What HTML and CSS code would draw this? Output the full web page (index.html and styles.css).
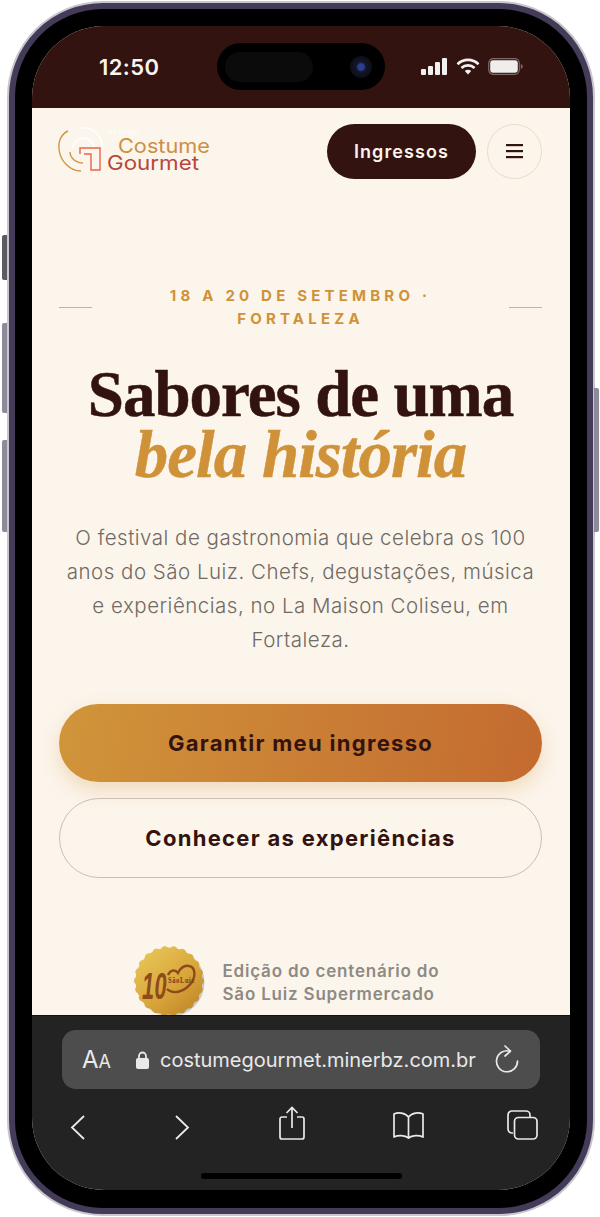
FILE: index.html
```html
<!DOCTYPE html>
<html lang="pt-BR">
<head>
  <meta charset="UTF-8" />
  <meta name="viewport" content="width=device-width, initial-scale=1.0" />
  <title>Costume Gourmet</title>
  <link rel="stylesheet" href="styles.css">
</head>
<body>
  <div class="phone">
    <span class="side-btn side-silent"></span>
    <span class="side-btn side-up"></span>
    <span class="side-btn side-down"></span>
    <span class="side-btn side-power"></span>
    <div class="bezel">
      <div class="screen">
        <div class="island">
          <span class="island-pill"></span>
          <span class="island-cam"></span>
        </div>

        <div class="status">
          <span class="clock">12:50</span>
          <div class="status-icons">
            <svg width="27" height="17" viewBox="0 0 27 17" fill="#f2f0ee">
              <rect x="0" y="11" width="5" height="6" rx="1"/>
              <rect x="7" y="8" width="5" height="9" rx="1"/>
              <rect x="14" y="4" width="5" height="13" rx="1"/>
              <rect x="21" y="0" width="5" height="17" rx="1"/>
            </svg>
            <svg width="24" height="17" viewBox="0 0 24 17" fill="none" stroke="#f2f0ee" stroke-width="2.6">
              <path d="M1.5 6.2a15 15 0 0 1 21 0"/>
              <path d="M5.4 10a9.5 9.5 0 0 1 13.2 0"/>
              <path d="M12 16.5l-3.2-3.4a4.6 4.6 0 0 1 6.4 0z" fill="#f2f0ee" stroke="none"/>
            </svg>
            <svg width="35" height="17" viewBox="0 0 35 17">
              <rect x="0.7" y="0.7" width="30.6" height="15.6" rx="4.5" fill="none" stroke="#7c6a66" stroke-width="1.2"/>
              <rect x="2.2" y="2.2" width="27.6" height="12.6" rx="3" fill="#f0eeec"/>
              <path d="M32.8 6v5c1.2-.4 2-1.4 2-2.5s-.8-2.1-2-2.5z" fill="#7c6a66"/>
            </svg>
          </div>
        </div>

        <main class="site">
          <header class="site-head">
            <svg class="logo" width="155" height="50" viewBox="0 0 155 50" fill="none">
              <path d="M11 4C3 8 1 16 2 22c1 12 11 22 22 22" stroke="#cf9548" stroke-width="1.4"/>
              <path d="M24 1c12-1 21 7 21 19" stroke="#fff" stroke-width="1.4"/>
              <path d="M16 21c0-6 5-10 10-10 5 0 9 3 11 8" stroke="#fff" stroke-width="1.4"/>
              <path d="M13 25c0 6 6 11 13 11" stroke="#cf9548" stroke-width="1.4"/>
              <path d="M23 27v-6h20v22h-9V27h-7" stroke="#e8644c" stroke-width="1.4"/>
              <text class="logo-fest" x="52" y="8">FESTIVAL</text>
              <text class="logo-word logo-word-a" x="61" y="26" textLength="92" lengthAdjust="spacingAndGlyphs">Costume</text>
              <text class="logo-word logo-word-b" x="50" y="43" textLength="92" lengthAdjust="spacingAndGlyphs">Gourmet</text>
            </svg>
            <div class="head-actions">
              <a class="ticket-btn">Ingressos</a>
              <button class="menu-btn" aria-label="Menu">
                <svg width="17" height="15" viewBox="0 0 17 15" fill="#32130f">
                  <rect y="0" width="17" height="2.2"/>
                  <rect y="6" width="17" height="2.2"/>
                  <rect y="12" width="17" height="2.2"/>
                </svg>
              </button>
            </div>
          </header>

          <section class="hero">
            <div class="eyebrow">
              <span class="eyebrow-line"></span>
              <p>18 A 20 DE SETEMBRO ·<br>FORTALEZA</p>
              <span class="eyebrow-line"></span>
            </div>
            <h1>Sabores de uma <em>bela história</em></h1>
            <p class="lead">O festival de gastronomia que celebra os 100 anos do São Luiz. Chefs, degustações, música e experiências, no La Maison Coliseu, em Fortaleza.</p>
            <a class="cta cta-main">Garantir meu ingresso</a>
            <a class="cta cta-ghost">Conhecer as experiências</a>
            <div class="edition">
              <svg class="medal" width="74" height="74" viewBox="0 0 74 74">
                <defs>
                  <linearGradient id="gold" gradientUnits="userSpaceOnUse" x1="10" y1="6" x2="62" y2="70">
                    <stop offset="0" stop-color="#e8c558"/>
                    <stop offset="0.55" stop-color="#d8a63a"/>
                    <stop offset="1" stop-color="#bf8428"/>
                  </linearGradient>
                </defs>
                <circle cx="37.500" cy="37.500" r="34" fill="#8d97a6" opacity="0.45"/>
                <circle cx="36" cy="36" r="31.5" fill="none" stroke="url(#gold)" stroke-width="7" stroke-linecap="round" stroke-dasharray="0.01 8.99"/>
                <circle cx="36" cy="36" r="33.5" fill="url(#gold)"/>
                <text class="medal-num" x="9" y="54" textLength="25" lengthAdjust="spacingAndGlyphs">10</text>
                <path d="M34 44c6 6 18 3 25-7 4-7 3-15-3-16-5-1-9 3-11 7-3-4-8-3-10 2" fill="none" stroke="#8f4a1b" stroke-width="2.4"/>
                <text class="medal-name" x="35" y="38" textLength="27" lengthAdjust="spacingAndGlyphs">SãoLuiz</text>
              </svg>
              <p>Edição do centenário do<br>São Luiz Supermercado</p>
            </div>
          </section>
        </main>

        <footer class="safari">
          <div class="url-bar">
            <span class="aa">A<small>A</small></span>
            <svg width="13" height="18" viewBox="0 0 13 18" fill="#e9e9e9">
              <path d="M3 8V5a3.5 3.5 0 0 1 7 0v3" fill="none" stroke="#e9e9e9" stroke-width="1.8"/>
              <rect x="0" y="7" width="13" height="11" rx="2"/>
            </svg>
            <span class="url">costumegourmet.minerbz.com.br</span>
            <svg class="reload" width="24" height="29" viewBox="0 0 24 29" fill="none" stroke="#e9e9e9" stroke-width="1.7" stroke-linecap="round" stroke-linejoin="round">
              <path d="M15 6.200A10.500 10.500 0 1 0 22.500 16"/>
              <path d="M10 1l5.500 5.200L10 11"/>
            </svg>
          </div>
          <nav class="safari-nav">
            <svg width="15" height="25" viewBox="0 0 15 25" fill="none" stroke="#e9e9e9" stroke-width="1.8"><path d="M14 1L2 12.500 14 24"/></svg>
            <svg width="15" height="25" viewBox="0 0 15 25" fill="none" stroke="#e9e9e9" stroke-width="1.8"><path d="M1 1l12 11.500L1 24"/></svg>
            <svg width="26" height="34" viewBox="0 0 26 34" fill="none" stroke="#e9e9e9" stroke-width="1.700"><path d="M8 11H3a2 2 0 0 0-2 2v18a2 2 0 0 0 2 2h20a2 2 0 0 0 2-2V13a2 2 0 0 0-2-2h-5M13 22V1.500M7.500 7L13 1.500 18.500 7"/></svg>
            <svg width="33" height="28" viewBox="0 0 33 28" fill="none" stroke="#e9e9e9" stroke-width="1.700" stroke-linejoin="round"><path d="M16.500 5C13 .5 6 0 2 2v23c4-2 11-2 14.500 1 3.500-3 10.500-3 14.500-1V2c-4-2-11-1.500-14.500 3zM16.500 5v21"/></svg>
            <svg width="31" height="30" viewBox="0 0 31 30" fill="none" stroke="#e9e9e9" stroke-width="1.700"><path d="M6 23H5a4 4 0 0 1-4-4V5a4 4 0 0 1 4-4h14a4 4 0 0 1 4 4v2"/><rect x="7.500" y="7.500" width="22.500" height="21.500" rx="4"/></svg>
          </nav>
          <div class="home-bar"></div>
        </footer>
      </div>
    </div>
  </div>
</body>
</html>
```

FILE: styles.css
```css
html, body {
  height: 100%;
}
body {
  margin: 0;
  background: #fff;
  overflow: hidden;
  font-family: 'Inter', 'Liberation Sans', sans-serif;
}
p, h1 {
  margin: 0;
}

/* device frame */
.phone {
  position: relative;
  box-sizing: border-box;
  width: 588px;
  margin: 1px 0 0 7px;
  padding: 6px;
  background: #433b58;
  border: 2px solid #c9c6cc;
  border-radius: 96px;
}
.bezel {
  padding: 17px 17px 18px;
  background: #000;
  border-radius: 88px;
}
.side-btn {
  position: absolute;
  left: -7px;
  width: 5px;
  background: #8e8a9c;
  border-radius: 2px 0 0 2px;
}
.side-silent { top: 232px; height: 45px; background: #5d5a66; }
.side-up { top: 320px; height: 90px; }
.side-down { top: 437px; height: 92px; }
.side-power { left: auto; right: -6px; top: 385px; height: 144px; border-radius: 0 2px 2px 0; }

.screen {
  position: relative;
  display: flex;
  flex-direction: column;
  height: 1164px;
  overflow: hidden;
  background: #fcf5ec;
  border-radius: 72px;
}
.island {
  position: absolute;
  top: 17px;
  left: 185px;
  display: flex;
  align-items: center;
  justify-content: space-between;
  box-sizing: border-box;
  width: 168px;
  height: 47px;
  padding: 0 13px 0 8px;
  background: #000;
  border-radius: 24px;
}
.island-pill {
  width: 88px;
  height: 30px;
  background: #0b0b0b;
  border-radius: 15px;
}
.island-cam {
  width: 22px;
  height: 22px;
  background: radial-gradient(circle, #2c3f8c 0 3px, #12162a 5px, #0d0e14 11px);
  border-radius: 50%;
}

/* status bar */
.status {
  flex: none;
  display: flex;
  align-items: center;
  justify-content: space-between;
  box-sizing: border-box;
  height: 82px;
  padding: 0 47px 1px 67px;
  background: #32130f;
}
.clock {
  color: #f7f5f3;
  font-size: 22px;
  font-weight: 600;
  letter-spacing: 0.4px;
}
.status-icons {
  display: flex;
  align-items: center;
  gap: 8px;
}

/* page */
.site {
  flex: 1;
  min-height: 0;
  overflow: hidden;
}
.site-head {
  display: flex;
  align-items: center;
  justify-content: space-between;
  padding: 16px 28px 0 25px;
}
.logo-fest {
  fill: #fff;
  font-size: 6px;
  letter-spacing: 0.5px;
}
.logo-word {
  font-size: 20px;
}
.logo-word-a { fill: #cd8f45; }
.logo-word-b { fill: #b8473a; }
.head-actions {
  display: flex;
  align-items: center;
  gap: 11px;
}
.ticket-btn {
  display: flex;
  align-items: center;
  justify-content: center;
  width: 149px;
  height: 55px;
  color: #fbf4ea;
  background: #32130f;
  border-radius: 28px;
  font-size: 18px;
  font-weight: 600;
  letter-spacing: 1.1px;
}
.menu-btn {
  display: flex;
  align-items: center;
  justify-content: center;
  box-sizing: border-box;
  width: 55px;
  height: 55px;
  padding: 0;
  background: none;
  border: 1px solid #e6dccb;
  border-radius: 50%;
}

.hero {
  padding: 105px 28px 0 27px;
  text-align: center;
}
.eyebrow {
  display: flex;
  align-items: center;
  justify-content: space-between;
  color: #cf9238;
  font-size: 15px;
  font-weight: 700;
  line-height: 23px;
  letter-spacing: 4.2px;
}
.eyebrow-line {
  flex: none;
  width: 33px;
  height: 1px;
  background: #d9b06e;
}
h1 {
  margin-top: 34px;
  color: #32130f;
  font-family: 'Liberation Serif', serif;
  font-size: 65px;
  font-weight: 700;
  line-height: 60px;
  letter-spacing: -1px;
  -webkit-text-stroke: 0.5px currentColor;
}
h1 em {
  display: block;
  color: #cf9238;
  font-size: 67px;
}
.lead {
  margin-top: 37px;
  color: #6f6a64;
  font-size: 20.5px;
  font-weight: 300;
  line-height: 34px;
  letter-spacing: 0.5px;
}
.cta {
  display: flex;
  align-items: center;
  justify-content: center;
  box-sizing: border-box;
  color: #32130f;
  border-radius: 40px;
  font-size: 22px;
  font-weight: 700;
  letter-spacing: 1.3px;
}
.cta-main {
  height: 78px;
  margin-top: 47px;
  background: linear-gradient(100deg, #d0953a, #c46a30);
  box-shadow: 0 8px 20px rgba(207, 146, 56, 0.28);
}
.cta-ghost {
  height: 80px;
  margin-top: 16px;
  border: 1.5px solid #cbbfb4;
}
.edition {
  display: flex;
  align-items: flex-start;
  justify-content: center;
  gap: 16px;
  margin-top: 67px;
  color: #8e8a84;
  font-size: 17px;
  font-weight: 600;
  line-height: 23px;
  letter-spacing: 0.8px;
  text-align: left;
}
.edition p {
  width: 246px;
  padding-top: 15px;
}
.medal-num {
  fill: #8f4a1b;
  font-family: 'Liberation Sans', sans-serif;
  font-size: 36px;
  font-style: italic;
}
.medal-name {
  fill: #7c3d17;
  font-family: 'Liberation Serif', serif;
  font-size: 9px;
  font-weight: 700;
}

/* safari toolbar */
.safari {
  flex: none;
  box-sizing: border-box;
  height: 175px;
  padding-top: 14px;
  background: #232323;
  border-top: 1px solid #111;
}
.url-bar {
  display: flex;
  align-items: center;
  box-sizing: border-box;
  height: 59px;
  margin: 0 30px;
  padding: 0 21px 0 20px;
  color: #e9e9e9;
  background: #4d4d4d;
  border-radius: 14px;
}
.aa {
  width: 54px;
  font-size: 24px;
  line-height: 1;
}
.aa small {
  font-size: 18px;
}
.url {
  margin-left: 11px;
  font-size: 20px;
  white-space: nowrap;
}
.reload {
  margin-left: auto;
}
.safari-nav {
  display: grid;
  grid-template-columns: 90px 120px 100px 132px 96px;
  justify-items: center;
  align-items: end;
  height: 44px;
  margin-top: 7px;
}
.home-bar {
  width: 201px;
  height: 6px;
  margin: 33px auto 0;
  background: #000;
  border-radius: 3px;
}
```
